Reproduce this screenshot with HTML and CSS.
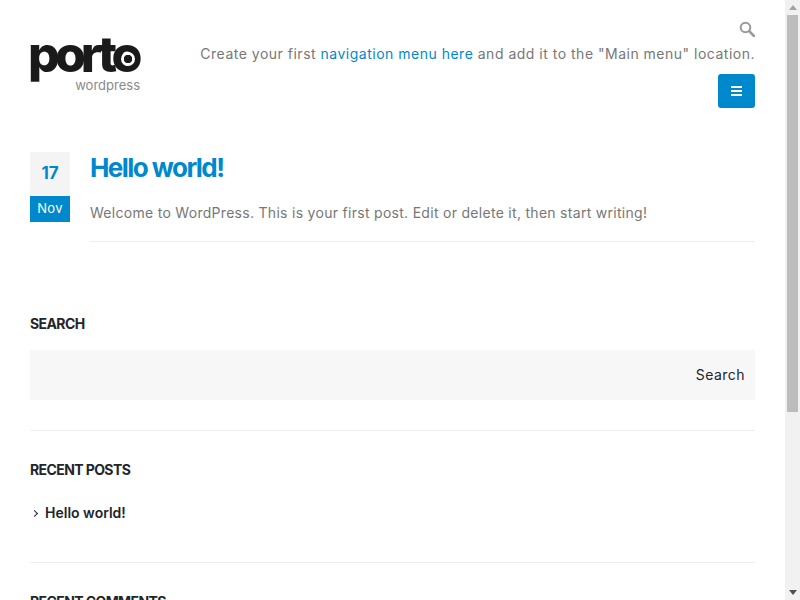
FILE: index.html
```html
<!DOCTYPE html>
<html lang="en">
<head>
  <meta charset="UTF-8">
  <meta name="viewport" content="width=device-width, initial-scale=1.0">
  <title>Porto WordPress</title>
  <link rel="stylesheet" href="styles.css">
</head>
<body>
  <header class="header">
    <a class="logo" href="#">
      <span class="logo-name">port<span class="logo-o">o</span></span>
      <span class="logo-sub">wordpress</span>
    </a>
    <div class="header-right">
      <svg class="search-icon" width="16" height="16" viewBox="0 0 16 16" fill="none" stroke="#999" aria-hidden="true">
        <circle cx="6.5" cy="6.5" r="4.8" stroke-width="2"/>
        <path d="M10.2 10.2 15 15" stroke-width="2.6" stroke-linecap="round"/>
      </svg>
      <p class="nav-note">Create your first <a href="#">navigation menu here</a> and add it to the "Main menu" location.</p>
      <button class="menu-toggle" aria-label="Menu">
        <span></span><span></span><span></span>
      </button>
    </div>
  </header>

  <main class="content">
    <article class="post">
      <div class="date">
        <span class="day">17</span>
        <span class="month">Nov</span>
      </div>
      <div class="post-body">
        <h2 class="post-title"><a href="#">Hello world!</a></h2>
        <p class="post-text">Welcome to WordPress. This is your first post. Edit or delete it, then start writing!</p>
      </div>
    </article>

    <section class="widget">
      <h3 class="widget-title">Search</h3>
      <form class="search-form">
        <button class="search-btn" type="button">Search</button>
      </form>
    </section>

    <section class="widget">
      <h3 class="widget-title">Recent Posts</h3>
      <ul class="widget-list">
        <li><a href="#">Hello world!</a></li>
      </ul>
    </section>

    <section class="widget widget-last">
      <h3 class="widget-title">Recent Comments</h3>
    </section>
  </main>

  <!-- drawn by hand, headless browser hides the real one -->
  <div class="scrollbar" aria-hidden="true">
    <span class="arrow-up"></span>
    <div class="scroll-track"><div class="scroll-thumb"></div></div>
    <span class="arrow-down"></span>
  </div>
</body>
</html>
```

FILE: styles.css
```css
body {
  font-family: Inter, "Open Sans", sans-serif;
  font-size: 14px;
  line-height: 24px;
  color: #777;
  margin: 0;
  padding-right: 15px;
  background: #fff;
}

a {
  text-decoration: none;
}

.header {
  display: flex;
  justify-content: space-between;
  padding: 20px 30px 0;
}

.logo {
  display: flex;
  flex-direction: column;
  width: 110px;
  margin-top: 10px;
}

.logo-name {
  font-size: 50px;
  line-height: 48px;
  font-weight: 800;
  letter-spacing: -5px;
  margin-left: -2px;
  color: #1a1a1a;
}

.logo-o {
  position: relative;
}

/* the eye in the last o of the logo */
.logo-o::after {
  content: "";
  position: absolute;
  left: 9px;
  top: 28px;
  width: 14px;
  height: 14px;
  border-radius: 50%;
  background: radial-gradient(circle, #1a1a1a 0 4px, #fff 4.5px);
}

.logo-sub {
  align-self: flex-end;
  font-size: 13px;
  line-height: 14px;
  color: #8a8a8a;
}

.header-right {
  display: flex;
  flex-direction: column;
  align-items: flex-end;
}

.search-icon {
  margin: 1px 0 5px;
}

.nav-note {
  margin: 0 0 8px;
  line-height: 24px;
  letter-spacing: 0.5px;
}

.nav-note a {
  color: #0088cc;
}

.menu-toggle {
  display: flex;
  flex-direction: column;
  justify-content: center;
  gap: 2px;
  align-items: center;
  width: 37px;
  height: 34px;
  padding: 0;
  border: none;
  border-radius: 3px;
  background: #0088cc;
}

.menu-toggle span {
  width: 11px;
  height: 2px;
  background: #fff;
}

.content {
  padding: 44px 30px 0;
}

.post {
  display: flex;
  gap: 20px;
  margin-bottom: 73px;
}

.date {
  display: flex;
  flex-direction: column;
  width: 40px;
  flex-shrink: 0;
  text-align: center;
}

.day {
  height: 44px;
  line-height: 43px;
  font-size: 17px;
  font-weight: 700;
  color: #0088cc;
  background: #f4f4f4;
}

.month {
  height: 26px;
  line-height: 24px;
  font-size: 13px;
  letter-spacing: 0.3px;
  color: #fff;
  background: #0088cc;
}

.post-body {
  flex: 1;
  border-bottom: 1px solid #eee;
}

.post-title {
  margin: 1px 0 0;
  font-size: 26px;
  line-height: 30px;
  font-weight: 700;
  letter-spacing: -1.55px;
}

.post-title a {
  color: #0088cc;
}

.post-text {
  margin: 18px 0 16px;
  letter-spacing: 0.29px;
}

.widget {
  border-bottom: 1px solid #eee;
  padding-bottom: 30px;
  margin-bottom: 30px;
}

.widget-last {
  border-bottom: none;
  height: 260px;
  margin-bottom: 0;
}

.widget-title {
  margin: 0 0 17px;
  font-size: 14px;
  line-height: 18px;
  font-weight: 700;
  letter-spacing: -0.6px;
  text-transform: uppercase;
  color: #222529;
}

.search-form {
  display: flex;
  justify-content: flex-end;
  align-items: center;
  height: 50px;
  background: #f7f7f7;
}

.search-btn {
  padding: 0 10px;
  border: none;
  background: none;
  font: inherit;
  letter-spacing: 0.45px;
  color: #222529;
}

.widget-list {
  list-style: none;
  margin: 0;
  padding: 0 0 1px;
}

.widget-list li {
  position: relative;
  padding: 5px 0 6px 15px;
}

.widget-list li::before {
  content: "";
  position: absolute;
  left: 2px;
  top: 15px;
  width: 4px;
  height: 4px;
  border-top: 1px solid #222529;
  border-right: 1px solid #222529;
  transform: rotate(45deg);
}

.widget-list a {
  font-weight: 600;
  color: #222529;
}

.scrollbar {
  position: fixed;
  top: 0;
  right: 0;
  bottom: 0;
  width: 15px;
  display: flex;
  flex-direction: column;
  align-items: center;
  background: #f1f1f1;
}

.arrow-up,
.arrow-down {
  width: 0;
  height: 0;
  margin: 5px 0;
  border-left: 4px solid transparent;
  border-right: 4px solid transparent;
}

.arrow-up {
  border-bottom: 5px solid #a3a3a3;
}

.arrow-down {
  border-top: 5px solid #505050;
}

.scroll-track {
  flex: 1;
  width: 100%;
}

.scroll-thumb {
  width: 11px;
  height: 397px;
  margin: 0 auto;
  background: #bcbcbc;
}
```
